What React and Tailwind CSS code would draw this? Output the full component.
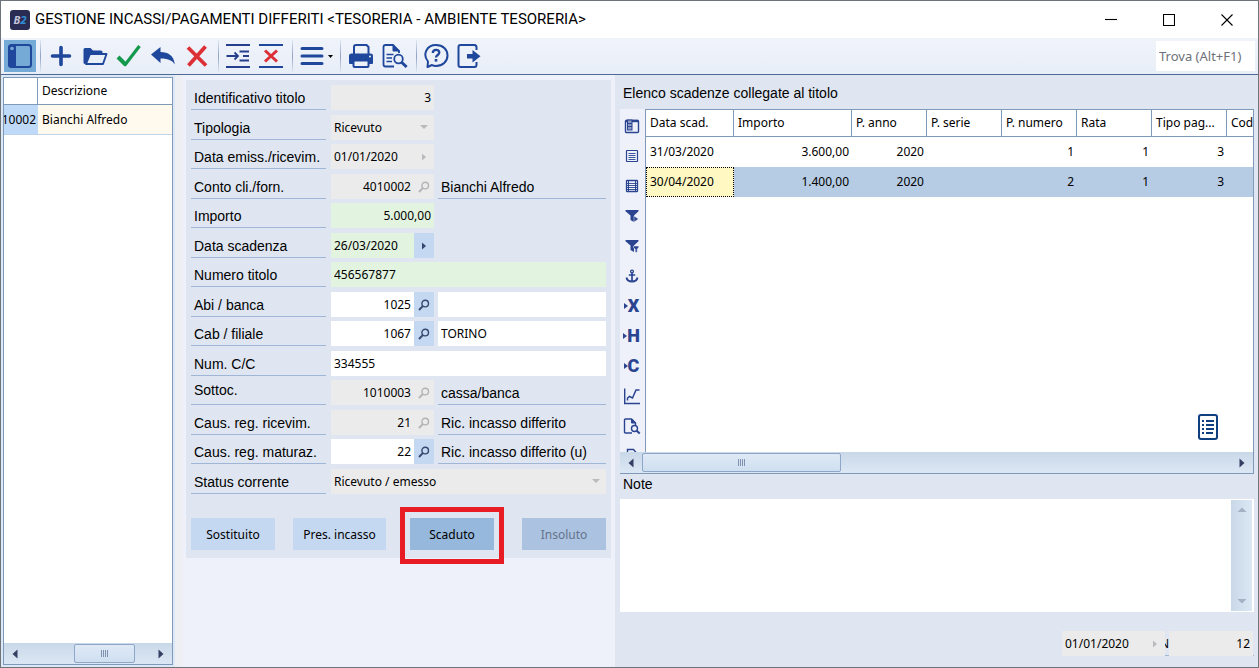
import { useState } from "react";
import clsx from "clsx";

/** small shared pieces ---------------------------------------------------- */
const Separator = () => (
  <span className="ml-1 mr-[3px] h-8 w-px shrink-0 bg-gradient-to-b from-[#dfe6f1] via-[#8fa3c2] to-[#dfe6f1]" />
);

const ToolButton = ({ label, children, className = "w-[34px]" }) => (
  <button
    type="button"
    aria-label={label}
    className={clsx("flex h-8 shrink-0 items-center justify-center", className)}
  >
    {children}
  </button>
);

const Lens = ({ muted }) => (
  <svg
    viewBox="0 0 12 12"
    className={clsx("h-3 w-3", muted ? "text-[#b4b4b8]" : "text-[#34486f]")}
    fill="none"
    stroke="currentColor"
    strokeWidth="1.4"
  >
    <circle cx="7.2" cy="4.6" r="3.3" />
    <path d="M4.8 7.1 1 11" strokeWidth="1.9" />
  </svg>
);

const Arrow = ({ dir, className = "text-[#333f63]" }) => {
  const paths = {
    left: "M8.500 1.500v9L3.500 6z",
    right: "M3.500 1.500v9L8.500 6z",
    up: "M1.500 8h9L6 3.500z",
    down: "M1.500 4h9L6 8.500z",
  };
  return (
    <svg viewBox="0 0 12 12" className={clsx("h-3 w-3", className)} fill="currentColor">
      <path d={paths[dir]} />
    </svg>
  );
};

const SmallArrow = ({ dir, className }) => (
  <svg viewBox="0 0 8 8" className={clsx("h-2 w-2", className)} fill="currentColor">
    <path d={dir === "right" ? "M2 0.5v7L6 4z" : "M0 2h8L4 6z"} />
  </svg>
);

const Grip = () => (
  <span className="flex gap-px">
    {[0, 1, 2, 3].map(i => (
      <span key={i} className="h-[7px] w-px bg-[#7f93b0]" />
    ))}
  </span>
);

/** toolbar drawings ------------------------------------------------------- */
const PanelIcon = () => (
  <svg viewBox="0 0 26 26" className="h-[26px] w-[26px]">
    <rect x="2" y="2" width="22" height="22" rx="2.5" fill="none" stroke="#1f479b" strokeWidth="2" />
    <path d="M3 2h6v22H3a1.500 1.500 0 0 1-1.500-1.500V3.500A1.500 1.500 0 0 1 3 2z" fill="#1f479b" />
    <circle cx="5" cy="5.500" r="1.800" fill="#75aad6" />
  </svg>
);

const PlusIcon = () => (
  <svg viewBox="0 0 24 24" className="h-6 w-6" stroke="#1f479b" strokeWidth="3.600" strokeLinecap="round">
    <path d="M12 3.500v17M3.500 12h17" />
  </svg>
);

const FolderIcon = () => (
  <svg viewBox="0 0 26 26" className="h-[26px] w-[26px]">
    <path d="M1.500 20V6.500Q1.500 5 3 5h5.500l2.500 2.500h8Q20.500 7.500 20.500 9v1.500H8L3.500 21Q1.500 21 1.500 20z" fill="#1f479b" />
    <path d="M8 11h16.500L21 21H4z" fill="#eaf0f8" stroke="#1f479b" strokeWidth="1.900" strokeLinejoin="round" />
  </svg>
);

const CheckIcon = () => (
  <svg viewBox="0 0 26 26" className="h-[26px] w-[26px]" fill="none" stroke="#14994c">
    <path d="M2 14l8 8" strokeWidth="4" />
    <path d="M8.500 22.500L23.500 3" strokeWidth="3.200" />
  </svg>
);

const UndoIcon = () => (
  <svg viewBox="0 0 26 26" className="h-[26px] w-[26px]" fill="#1f479b">
    <path d="M1 11.500L10.500 4v5C18 9 24 12.500 24.800 21.500c-2-3.500-6-6-14.300-6V20z" />
  </svg>
);

const CrossIcon = () => (
  <svg viewBox="0 0 26 26" className="h-[26px] w-[26px]" stroke="#dc2f36">
    <path d="M4 4.500l18 18M21.500 3.500L4.500 22.500" strokeWidth="3.800" />
  </svg>
);

const InsertRowIcon = () => (
  <svg viewBox="0 0 26 26" className="h-[26px] w-[26px]" fill="none" stroke="#253f8e">
    <path d="M1 2h24M1 24h24M14.500 8.500H24M14.500 17.500H24M18 13h6" strokeWidth="2" />
    <path d="M1.500 13h11M9.500 9.500l3.500 3.500-3.500 3.500" strokeWidth="1.800" />
  </svg>
);

const DeleteRowIcon = () => (
  <svg viewBox="0 0 26 26" className="h-[26px] w-[26px]" fill="none">
    <path d="M1 2h24M1 24h24" stroke="#1f479b" strokeWidth="2" />
    <path d="M7 7.500l12 11M19 7.500l-12 11" stroke="#dc2f36" strokeWidth="3" />
  </svg>
);

const PrinterIcon = () => (
  <svg viewBox="0 0 26 26" className="h-[26px] w-[26px]">
    <path d="M6 11V4Q6 2 8 2h10.500L20.500 4v7" fill="none" stroke="#1f479b" strokeWidth="2" />
    <path d="M1 20v-7.500Q1 10.500 3.500 10.500h19Q25 10.500 25 12.500V20Q25 21 24 21H2Q1 21 1 20z" fill="#1f479b" />
    <rect x="5.500" y="17.500" width="15" height="6.500" rx="1" fill="#eef2f9" stroke="#1f479b" strokeWidth="2" />
    <circle cx="22" cy="13.500" r="1" fill="#eef2f9" />
  </svg>
);

const DocSearchIcon = () => (
  <svg viewBox="0 0 26 26" className="h-[26px] w-[26px]" fill="none" stroke="#1f479b">
    <path d="M12 23.500H3.500Q1.500 23.500 1.500 21.500V4Q1.500 2 3.500 2H11l6 6v2" strokeWidth="1.800" />
    <path d="M11 2v6h6.500z" fill="#1f479b" />
    <path d="M4.500 11.500h7M4.500 15h5.500M4.500 18.500h5.500" strokeWidth="1.700" />
    <circle cx="16.500" cy="16" r="4.300" strokeWidth="1.800" />
    <path d="M19.800 19.500l4.800 4.500" strokeWidth="3" />
  </svg>
);

const HelpIcon = () => (
  <svg viewBox="0 0 26 26" className="h-[26px] w-[26px]" fill="none" stroke="#1f479b">
    <path
      d="M4.500 24l.5-5.500C-1 11 4 2 13 2c7 0 11.500 4.500 11.500 10.500S19.500 23 13 23c-1.500 0-3-.3-4-1z"
      strokeWidth="2"
      strokeLinejoin="round"
    />
    <path d="M9.800 10c0-4 6.500-4 6.500-.5 0 2.500-3.300 2.500-3.300 5" strokeWidth="2.300" />
    <path d="M13 16v2.600" strokeWidth="2.600" />
  </svg>
);

const ExitIcon = () => (
  <svg viewBox="0 0 26 26" className="h-[26px] w-[26px]" fill="none" stroke="#1f479b">
    <path d="M20.500 7V4.500Q20.500 2 18.500 2H4.500Q2.500 2 2.500 4v18q0 2 2 2h14q2 0 2-2.500V19" strokeWidth="2" />
    <path d="M11 11h5.500V7l8 6.200-8 6.300v-4H11z" fill="#1f479b" stroke="none" />
  </svg>
);

/** icons down the side of the grid --------------------------------------- */
const Funnel = () => <path d="M1.500 2h13v1.200L10 7.500V14L6.500 12V7.500L1.500 3.200z" fill="#2b4490" />;

const KeyLetter = ({ letter }) => (
  <span className="flex items-center font-[Roboto,sans-serif] text-[18px] font-black leading-4 text-[#2b4490]">
    <svg viewBox="0 0 4 6" className="h-[6px] w-1" fill="#2b4490">
      <path d="M0 0v6l4-3z" />
    </svg>
    {letter}
  </span>
);

const sideIcons = [
  {
    name: "Colonne",
    icon: (
      <svg viewBox="0 0 16 16" className="h-4 w-4" fill="none" stroke="#2b4490">
        <rect x="1.500" y="2.500" width="13" height="12" rx="1" strokeWidth="1.400" />
        <path d="M1.500 3h13" strokeWidth="2.400" />
        <rect x="3.500" y="2" width="4.500" height="10" fill="#8c9cc6" strokeWidth="1" />
        <path d="M3.500 5.500H8M3.500 8.500H8" strokeWidth="1" />
      </svg>
    ),
  },
  {
    name: "Elenco",
    icon: (
      <svg viewBox="0 0 16 16" className="h-4 w-4" fill="none" stroke="#2b4490">
        <rect x="2.500" y="2.500" width="11" height="11" rx="0.500" strokeWidth="1.200" />
        <path d="M4.500 5.500h7M4.500 7.500h7M4.500 9.500h7M4.500 11.500h7" strokeWidth="0.900" />
      </svg>
    ),
  },
  {
    name: "Griglia",
    icon: (
      <svg viewBox="0 0 16 16" className="h-4 w-4" fill="none" stroke="#2b4490">
        <rect x="2.500" y="2.500" width="11" height="11" rx="0.500" strokeWidth="1.300" />
        <path d="M3 5.500h10M3 7.500h10M3 9.500h10M3 11.500h10" strokeWidth="0.900" />
        <path d="M4.500 3v10M11.500 3v10" strokeWidth="1" />
      </svg>
    ),
  },
  {
    name: "Filtro",
    icon: (
      <svg viewBox="0 0 16 16" className="h-4 w-4">
        <Funnel />
        <path d="M10 8v6l4.500-3z" fill="#2b4490" stroke="#eef1fa" strokeWidth="0.500" />
      </svg>
    ),
  },
  {
    name: "Filtro avanzato",
    icon: (
      <svg viewBox="0 0 16 16" className="h-4 w-4">
        <Funnel />
        <path d="M9.500 8h5.200v1.800l-1.500 1.300v3.200h-2v-3.200L9.500 9.800z" fill="#2b4490" stroke="#eef1fa" strokeWidth="0.500" />
      </svg>
    ),
  },
  {
    name: "Ancora",
    icon: (
      <svg viewBox="0 0 16 16" className="h-4 w-4" fill="none" stroke="#2b4490">
        <circle cx="8" cy="3.500" r="1.400" strokeWidth="1.300" />
        <path d="M8 5v8.500M4.800 7h6.400" strokeWidth="1.700" />
        <path d="M2.500 9.500c.5 3 3 4 5.500 4s5-1 5.500-4" strokeWidth="1.900" />
      </svg>
    ),
  },
  { name: "Chiave X", icon: <KeyLetter letter="X" /> },
  { name: "Chiave H", icon: <KeyLetter letter="H" /> },
  { name: "Chiave C", icon: <KeyLetter letter="C" /> },
  {
    name: "Grafico",
    icon: (
      <svg viewBox="0 0 18 18" className="h-[18px] w-[18px]" fill="none" stroke="#2b4490">
        <path d="M1.700 1.500v15H17" strokeWidth="1.400" />
        <path d="M4.500 13.500V11l2-1.500 3 1.500 3.500-8h3.500" strokeWidth="1.500" />
      </svg>
    ),
  },
  {
    name: "Anteprima",
    icon: (
      <svg viewBox="0 0 18 18" className="h-[18px] w-[18px]" fill="none" stroke="#2b4490">
        <path d="M9 16H2.500Q1.500 16 1.500 15V3Q1.500 2 2.500 2H8.500l4 4v2.500" strokeWidth="1.400" />
        <path d="M8.500 2v4h4z" fill="#2b4490" />
        <circle cx="11.500" cy="11.500" r="3" strokeWidth="1.400" />
        <path d="M13.700 13.700l3 2.800" strokeWidth="2" />
      </svg>
    ),
  },
  {
    name: "Documento",
    icon: (
      <svg viewBox="0 0 18 18" className="h-[18px] w-[18px]" fill="none" stroke="#2b4490">
        <path d="M4.500 16V2.500h6l3 3.500v10" strokeWidth="1.400" />
      </svg>
    ),
  },
];

/** form ------------------------------------------------------------------- */
const tones = {
  off: "bg-[#ebebeb]",
  green: "bg-[#e2f3df]",
  on: "bg-white",
};

const rows = [
  { id: "titolo", label: "Identificativo titolo", value: "3", tone: "off", right: true },
  { id: "tipologia", label: "Tipologia", value: "Ricevuto", tone: "off", kind: "select" },
  { id: "emissione", label: "Data emiss./ricevim.", value: "01/01/2020", tone: "off", kind: "date" },
  { id: "conto", label: "Conto cli./forn.", value: "4010002", tone: "off", kind: "lookup", text: "Bianchi Alfredo" },
  { id: "importo", label: "Importo", value: "5.000,00", tone: "green", right: true },
  { id: "scadenza", label: "Data scadenza", value: "26/03/2020", tone: "green", kind: "date", active: true },
  { id: "numero", label: "Numero titolo", value: "456567877", tone: "green", wide: true },
  { id: "abi", label: "Abi / banca", value: "1025", tone: "on", kind: "lookup", active: true, extra: "" },
  { id: "cab", label: "Cab / filiale", value: "1067", tone: "on", kind: "lookup", active: true, extra: "TORINO" },
  { id: "cc", label: "Num. C/C", value: "334555", tone: "on", wide: true },
  { id: "sottoc", label: "Sottoc.", value: "1010003", tone: "off", kind: "lookup", text: "cassa/banca", raised: true },
  { id: "ricevim", label: "Caus. reg. ricevim.", value: "21", tone: "off", kind: "lookup", text: "Ric. incasso differito" },
  { id: "maturaz", label: "Caus. reg. maturaz.", value: "22", tone: "on", kind: "lookup", active: true, text: "Ric. incasso differito (u)" },
  { id: "status", label: "Status corrente", value: "Ricevuto / emesso", tone: "off", kind: "select", wide: true },
];

const FieldRow = ({ row, value, onChange }) => {
  const hasButton = row.kind === "lookup" || row.kind === "date";

  return (
    <div className="flex h-[25px] odd:mb-[5px] even:mb-1">
      <label
        htmlFor={row.id}
        className={clsx(
          "mr-[5px] w-[135px] shrink-0 whitespace-nowrap border-b border-[#9fb6d6] pl-[3px] font-['Liberation_Sans',Arial,sans-serif] text-[14px]",
          row.raised ? "leading-5" : "leading-[27px]"
        )}
      >
        {row.label}
      </label>

      <div className={clsx("relative flex", row.wide ? "flex-1" : "w-[103px] shrink-0", tones[row.tone])}>
        {row.kind === "select" ? (
          <>
            <select id={row.id} defaultValue={row.value} className="w-full appearance-none bg-transparent pl-[3px] outline-none">
              <option>{row.value}</option>
            </select>
            <SmallArrow dir="down" className="pointer-events-none absolute right-[6px] top-2 text-[#b9babd]" />
          </>
        ) : (
          <input
            id={row.id}
            type="text"
            value={value}
            onChange={e => onChange(row.id, e.target.value)}
            className={clsx(
              "w-0 flex-1 bg-transparent px-[3px] outline-none",
              (row.right || row.kind === "lookup") && "text-right"
            )}
          />
        )}
        {hasButton && (
          <button
            type="button"
            aria-label={`Cerca ${row.label}`}
            className={clsx("flex w-5 shrink-0 items-center justify-center", row.active && "bg-[#c5d8f1]")}
          >
            {row.kind === "lookup" ? (
              <Lens muted={!row.active} />
            ) : (
              <SmallArrow dir="right" className={row.active ? "text-[#34486f]" : "text-[#b9babd]"} />
            )}
          </button>
        )}
      </div>

      {row.text && (
        <output className="ml-1 flex-1 whitespace-nowrap border-b border-[#9fb6d6] pl-[3px] font-['Liberation_Sans',Arial,sans-serif] text-[14px] leading-[27px]">
          {row.text}
        </output>
      )}
      {row.extra !== undefined && (
        <input
          type="text"
          aria-label={`Descrizione ${row.label}`}
          defaultValue={row.extra}
          className="ml-1 w-0 flex-1 bg-white px-[3px] outline-none"
        />
      )}
    </div>
  );
};

/** data ------------------------------------------------------------------- */
const columns = ["Data scad.", "Importo", "P. anno", "P. serie", "P. numero", "Rata", "Tipo pag...", "Cod"];

const deadlines = [
  ["31/03/2020", "3.600,00", "2020", "", "1", "1", "3", ""],
  ["30/04/2020", "1.400,00", "2020", "", "2", "1", "3", ""],
];

const App = () => {
  const [values, setValues] = useState(Object.fromEntries(rows.map(r => [r.id, r.value])));
  const [selected, setSelected] = useState(1);

  const updateValue = (id, value) => setValues(prev => ({ ...prev, [id]: value }));

  return (
    <div className="flex h-screen flex-col overflow-hidden border border-[#6f737a] bg-[#dfe6f1] font-['Noto_Sans','Open_Sans',sans-serif] text-[12px] text-black">
      {/* title bar */}
      <header className="flex h-[37px] shrink-0 items-center bg-white pl-[9px] pr-[2px]">
        <span className="mr-[5px] flex h-5 w-5 items-center justify-center rounded-[3px] bg-[#2a2b52] text-[11px] font-bold italic leading-none text-[#c3c4dc]">
          B<span className="text-[#2f8fd6]">2</span>
        </span>
        <h1 className="flex-1 whitespace-nowrap font-[Roboto,sans-serif] text-[15px]">
          GESTIONE INCASSI/PAGAMENTI DIFFERITI &lt;TESORERIA - AMBIENTE TESORERIA&gt;
        </h1>
        {[
          { label: "Riduci", d: "M0 5.500h12" },
          { label: "Ingrandisci", d: "M0.500 0.500h11v11h-11z" },
          { label: "Chiudi", d: "M0.500 0.500l11 11M11.500 0.500l-11 11" },
        ].map(b => (
          <button key={b.label} type="button" aria-label={b.label} className="flex h-full w-[58px] items-center justify-center">
            <svg viewBox="0 0 12 12" className="h-3 w-3" fill="none" stroke="#000" strokeWidth="1.100">
              <path d={b.d} />
            </svg>
          </button>
        ))}
      </header>

      {/* toolbar */}
      <div className="flex h-9 shrink-0 items-center bg-gradient-to-b from-[#f0f3fa] to-[#e8eef8] pl-[3px] pr-[3px]">
        <ToolButton label="Pannello" className="w-8 bg-[#75aad6]"><PanelIcon /></ToolButton>
        <Separator />
        <ToolButton label="Nuovo"><PlusIcon /></ToolButton>
        <ToolButton label="Apri"><FolderIcon /></ToolButton>
        <ToolButton label="Conferma"><CheckIcon /></ToolButton>
        <ToolButton label="Annulla"><UndoIcon /></ToolButton>
        <ToolButton label="Elimina"><CrossIcon /></ToolButton>
        <Separator />
        <ToolButton label="Inserisci riga" className="w-8"><InsertRowIcon /></ToolButton>
        <ToolButton label="Elimina riga"><DeleteRowIcon /></ToolButton>
        <Separator />
        <ToolButton label="Menu" className="w-10 gap-1">
          <svg viewBox="0 0 24 20" className="h-5 w-6" stroke="#1f479b" strokeWidth="3" strokeLinecap="round">
            <path d="M2 2.500h20M2 10h20M2 17.500h20" />
          </svg>
          <svg viewBox="0 0 5 3" className="h-[3px] w-[5px]"><path d="M0 0h5L2.500 3z" /></svg>
        </ToolButton>
        <Separator />
        <ToolButton label="Stampa"><PrinterIcon /></ToolButton>
        <ToolButton label="Anteprima di stampa"><DocSearchIcon /></ToolButton>
        <Separator />
        <ToolButton label="Aiuto" className="w-8"><HelpIcon /></ToolButton>
        <ToolButton label="Esci"><ExitIcon /></ToolButton>
        <input
          type="text"
          aria-label="Trova"
          placeholder="Trova (Alt+F1)"
          className="ml-auto h-[30px] w-[99px] bg-white px-[3px] text-[13px] outline-none placeholder:text-[#6d7178]"
        />
      </div>

      <main className="flex min-h-0 flex-1 border-t border-[#4d6b94]">
        {/* record list */}
        <aside className="flex w-[174px] shrink-0 flex-col bg-[#dce8f5] p-[2px]">
          <div className="flex min-h-0 flex-1 flex-col border border-[#7f9ab8] bg-white">
            <table className="w-full table-fixed border-separate border-spacing-0">
              <colgroup>
                <col className="w-[34px]" />
                <col />
              </colgroup>
              <thead>
                <tr className="h-[27px] text-left">
                  <th aria-label="Codice" className="border-b border-r border-[#7f9ab8]" />
                  <th className="border-b border-[#7f9ab8] pl-1 font-normal">Descrizione</th>
                </tr>
              </thead>
              <tbody>
                <tr className="h-[30px] bg-[#fff9ee]">
                  <td className="border-b border-[#bcd3ee] bg-[#bfdaf8]">
                    <div className="flex justify-end overflow-hidden pr-[2px]">10002</div>
                  </td>
                  <td className="whitespace-nowrap border-b border-[#bcd3ee] pl-1">Bianchi Alfredo</td>
                </tr>
              </tbody>
            </table>
            <div className="mt-auto flex h-[21px] items-center bg-gradient-to-b from-[#c9d8e8] to-[#dbe7f4] px-[5px]">
              <Arrow dir="left" />
              <span className="ml-[53px] mr-auto flex h-[19px] w-[61px] items-center justify-center rounded-[2px] border border-[#8ea6c8] bg-gradient-to-b from-[#dfe9f6] to-[#cfdff0]">
                <Grip />
              </span>
              <Arrow dir="right" />
            </div>
          </div>
        </aside>
        <div className="w-[7px] shrink-0 bg-[#eeeff2]" />

        {/* title form */}
        <section className="w-[433px] shrink-0 bg-[#eef1fa] px-1 pt-[5px]">
          <form className="bg-[#dfe6f1] px-[5px] pb-2 pt-[5px]" onSubmit={e => e.preventDefault()}>
            <div>
              {rows.map(row => (
                <FieldRow key={row.id} row={row} value={values[row.id]} onChange={updateValue} />
              ))}
            </div>
            <div className="mt-6 flex h-8">
              <button type="button" className="w-[84px] bg-[#c5d8f1] pt-px">Sostituito</button>
              <button type="button" className="ml-[18px] w-[93px] bg-[#c5d8f1] pt-px">Pres. incasso</button>
              <div className="relative ml-6 flex w-[84px]">
                <button type="button" className="flex-1 bg-[#95b8dc] pt-px">Scaduto</button>
                <span className="pointer-events-none absolute -inset-x-[10px] -bottom-[14px] -top-[11px] border-[5px] border-[#e81c24]" />
              </div>
              <button type="button" disabled className="ml-auto w-[84px] bg-[#abc2e0] pt-px text-[#64748c]">Insoluto</button>
            </div>
          </form>
        </section>

        {/* deadlines */}
        <section className="flex min-w-0 flex-1 flex-col bg-[#dfe6f1] pl-[5px] pr-1">
          <h2 className="h-[34px] pl-[3px] font-['Liberation_Sans',Arial,sans-serif] text-[14px] leading-[36px]">
            Elenco scadenze collegate al titolo
          </h2>

          <div className="flex h-[343px] min-h-0">
            <div className="flex w-[25px] shrink-0 flex-col overflow-hidden bg-[#eef1fa] pr-[2px] pt-[2px]">
              {sideIcons.map(s => (
                <button key={s.name} type="button" aria-label={s.name} className="flex h-[30px] shrink-0 items-center justify-center">
                  {s.icon}
                </button>
              ))}
            </div>

            <div className="relative min-w-0 flex-1 overflow-hidden border border-b-0 border-[#7f9ab8] bg-white">
              <table className="w-full table-fixed border-separate border-spacing-0">
                <colgroup>
                  <col className="w-[88px]" />
                  <col className="w-[118px]" />
                  <col className="w-[75px]" />
                  <col className="w-[75px]" />
                  <col className="w-[75px]" />
                  <col className="w-[75px]" />
                  <col className="w-[75px]" />
                  <col />
                </colgroup>
                <thead>
                  <tr className="h-[27px] text-left">
                    {columns.map(c => (
                      <th
                        key={c}
                        className="overflow-hidden whitespace-nowrap border-b border-r border-[#7f9ab8] pl-1 font-normal last:border-r-0"
                      >
                        {c}
                      </th>
                    ))}
                  </tr>
                </thead>
                <tbody>
                  {deadlines.map((cells, idx) => (
                    <tr
                      key={cells[0]}
                      onClick={() => setSelected(idx)}
                      className={clsx("h-[30px]", idx === selected && "bg-[#b6cce5]")}
                    >
                      {cells.map((cell, i) => (
                        <td
                          key={i}
                          className={clsx(
                            i === 0 ? "pl-1 text-left" : "pr-[3px] text-right",
                            i === 0 && idx === selected && "bg-[#fff8c2] outline-1 -outline-offset-1 outline-dotted outline-black"
                          )}
                        >
                          {cell}
                        </td>
                      ))}
                    </tr>
                  ))}
                </tbody>
              </table>

              {/* floating list toggle */}
              <button type="button" aria-label="Dettaglio" className="absolute bottom-3 right-[35px]">
                <svg viewBox="0 0 20 26" className="h-[26px] w-5" fill="none" stroke="#0f3f7e">
                  <rect x="1" y="1" width="18" height="24" rx="2" strokeWidth="2" />
                  <path d="M4 7h2M4 11h2M4 15h2M4 19h2M8 7h8M8 11h8M8 15h8M8 19h7" strokeWidth="2" />
                </svg>
              </button>
            </div>
          </div>

          <div className="flex h-[22px] shrink-0 items-center border-b border-r border-[#7f9ab8] bg-gradient-to-b from-[#c9d8e8] to-[#dbe7f4] px-[5px]">
            <Arrow dir="left" />
            <span className="ml-[5px] mr-auto flex h-[19px] w-[199px] items-center justify-center rounded-[2px] border border-[#8ea6c8] bg-gradient-to-b from-[#dfe9f6] to-[#cfdff0]">
              <Grip />
            </span>
            <Arrow dir="right" />
          </div>

          <label htmlFor="note" className="h-[25px] shrink-0 pl-[3px] font-['Liberation_Sans',Arial,sans-serif] text-[14px] leading-5">
            Note
          </label>
          <div className="flex h-[113px] shrink-0 bg-white p-px pr-[2px]">
            <textarea id="note" className="flex-1 resize-none bg-white p-1 outline-none" />
            <div className="flex w-[21px] flex-col items-center justify-between bg-gradient-to-r from-[#c9d8e8] to-[#dbe7f4] py-1">
              <Arrow dir="up" className="text-[#a3b1c4]" />
              <Arrow dir="down" className="text-[#a3b1c4]" />
            </div>
          </div>

          <div className="mt-[19px] flex h-[25px] shrink-0 justify-end">
            <div className="flex w-[103px] bg-[#ebebeb]">
              <input type="text" aria-label="Data" defaultValue="01/01/2020" className="w-0 flex-1 bg-transparent px-[3px] outline-none" />
              <button type="button" aria-label="Scegli data" className="flex w-5 items-center justify-center">
                <SmallArrow dir="right" className="text-[#b9babd]" />
              </button>
            </div>
            <label
              htmlFor="n"
              className="flex w-1 justify-end overflow-hidden border-b border-[#9fb6d6] leading-[25px]"
            >
              N
            </label>
            <input id="n" type="text" defaultValue="12" className="w-[84px] bg-[#ebebeb] px-[3px] text-right outline-none" />
            <span className="w-px border-b border-[#9fb6d6]" />
          </div>
        </section>
      </main>
    </div>
  );
};

export default App;
